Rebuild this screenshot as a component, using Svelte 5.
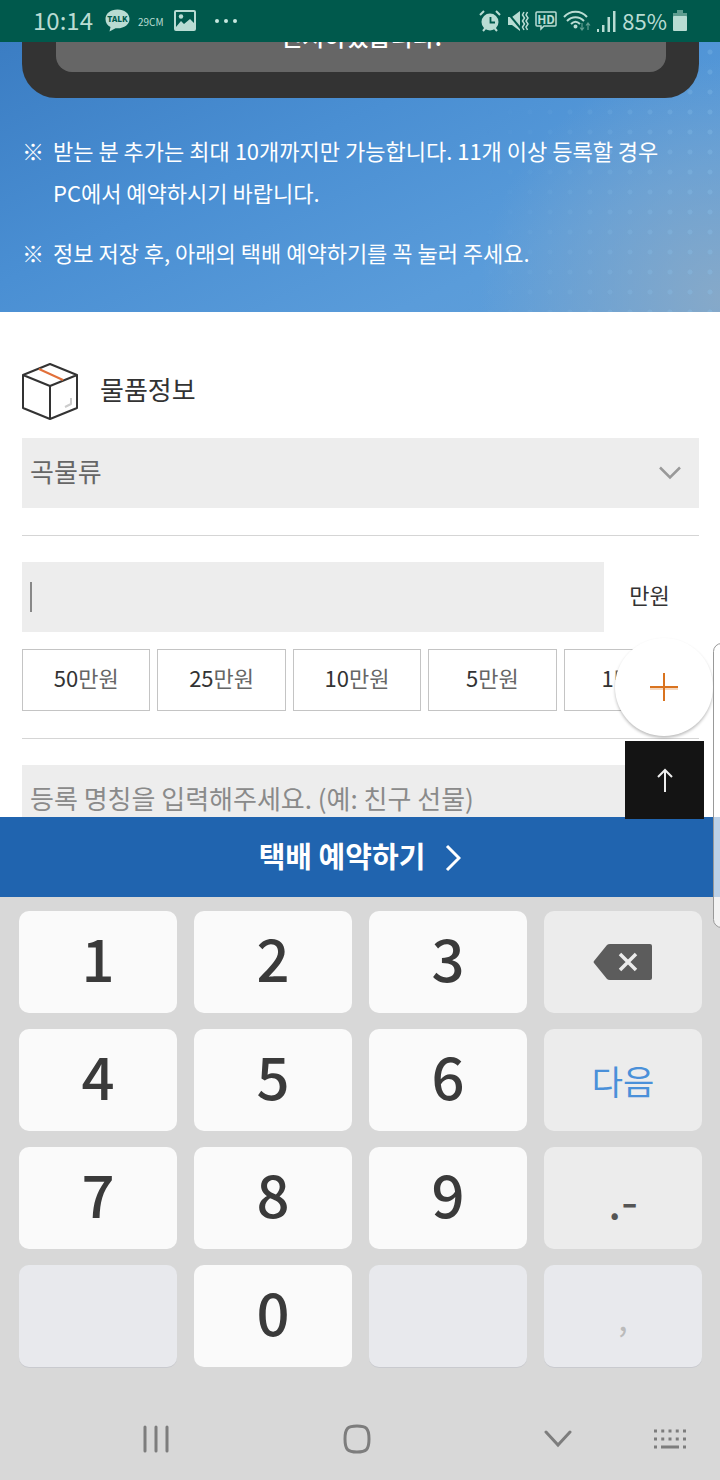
<script>
    let item = "곡물류";
    let amount = "";
    let nickname = "";
    const items = ["곡물류"];
    const amounts = [50, 25, 10, 5, 1];
    const notices = [
        "받는 분 추가는 최대 10개까지만 가능합니다. 11개 이상 등록할 경우 PC에서 예약하시기 바랍니다.",
        "정보 저장 후, 아래의 택배 예약하기를 꼭 눌러 주세요.",
    ];
    const keys = [
        { label: "1", type: "digit" },
        { label: "2", type: "digit" },
        { label: "3", type: "digit" },
        { label: "", type: "fn back" },
        { label: "4", type: "digit" },
        { label: "5", type: "digit" },
        { label: "6", type: "digit" },
        { label: "다음", type: "fn next" },
        { label: "7", type: "digit" },
        { label: "8", type: "digit" },
        { label: "9", type: "digit" },
        { label: ".-", type: "fn mark" },
        { label: "", type: "off" },
        { label: "0", type: "digit" },
        { label: "", type: "off" },
        { label: ",", type: "off" },
    ];
    function press(key) {
        if (key.type === "digit") {
            amount += key.label;
        } else if (key.type === "fn back") {
            amount = amount.slice(0, -1);
        }
    }
</script>

<div class="screen">
    <header class="status">
        <span class="time">10:14</span>
        <svg width="25" height="24" viewBox="0 0 25 24">
            <path d="M12.500 0.500C5.500 0.500 0.500 4.500 0.500 10c0 4 2 6.500 5 8l-1 4.500 6-3.300c8 0.800 14-3.200 14-9.200 0-5.500-5-9.500-12-9.500z" fill="#b9dcd3" />
            <text x="12.500" y="13" text-anchor="middle" font-size="8" font-weight="900" fill="#00594c">TALK</text>
        </svg>
        <span class="brand">29CM</span>
        <svg class="photo" width="22" height="22" viewBox="0 0 22 22">
            <rect x="1" y="1" width="20" height="19" rx="1" fill="none" stroke="#b9dcd3" stroke-width="2" />
            <circle cx="7" cy="6.500" r="2.200" fill="#b9dcd3" />
            <path d="M2 17l5-6 3 3 6-5 5 5v6H2z" fill="#b9dcd3" />
        </svg>
        <svg class="more" width="24" height="6" viewBox="0 0 24 6" fill="#c8e8e0">
            <circle cx="3" cy="3" r="2" /><circle cx="12" cy="3" r="2" /><circle cx="21" cy="3" r="2" />
        </svg>
        <span class="space"></span>
        <svg width="22" height="22" viewBox="0 0 22 22">
            <circle cx="11" cy="12" r="8.500" fill="#b9dcd3" />
            <path d="M1 5l4-4M21 5l-4-4M4 21l2.500-3M18 21l-2.500-3" stroke="#b9dcd3" stroke-width="2" />
            <path d="M11.500 7v5.500H16" fill="none" stroke="#00594c" stroke-width="1.800" />
        </svg>
        <svg width="22" height="22" viewBox="0 0 22 22">
            <path d="M1 7h4l8-6v20l-8-6H1z" fill="#b9dcd3" />
            <path d="M0 2l15 18" stroke="#00594c" stroke-width="2" />
            <path d="M17 2l-1.500 3 2 3-2 3 2 3-2 3 1.500 3M20.500 2L19 5l2 3-2 3 2 3-2 3 1.500 3" fill="none" stroke="#b9dcd3" stroke-width="1.500" />
        </svg>
        <svg width="22" height="20" viewBox="0 0 22 20">
            <path d="M2 1h18q1 0 1 1v12q0 1-1 1H9l-3 3v-3H2q-1 0-1-1V2q0-1 1-1z" fill="none" stroke="#b9dcd3" stroke-width="1.500" />
            <text x="11" y="12.500" text-anchor="middle" font-size="12" font-weight="700" fill="#b9dcd3">HD</text>
        </svg>
        <svg width="28" height="22" viewBox="0 0 28 22" fill="none" stroke="#b9dcd3" stroke-width="2">
            <path d="M1 7c6-7 17-7 23 0M4 11c5-5 12-5 17 0M8 14c3-3 6-3 9 0" />
            <circle cx="12.500" cy="16.500" r="1" />
            <path d="M19 13v7M17 17.500l2 2.500 2-2.500M25 20v-7M23 15.500l2-2.500 2 2.500" stroke="#5f9d90" stroke-width="1.200" />
        </svg>
        <svg width="19" height="21" viewBox="0 0 19 21" fill="#b9dcd3">
            <rect y="18" width="2" height="3" /><rect x="5" y="14" width="2.500" height="7" /><rect x="10.500" y="6" width="2.500" height="15" /><rect x="16" width="2.500" height="21" />
        </svg>
        <span class="percent">85%</span>
        <svg width="14" height="22" viewBox="0 0 14 22">
            <path d="M4 0h6v3h4v4H0V3h4z" fill="#5f9d90" />
            <rect y="6" width="14" height="15" rx="1" fill="#b9dcd3" />
        </svg>
    </header>

    <div class="page">
        <main>
            <section class="hero">
                <div class="card"><p>인지하였습니다.</p></div>
                <ul>
                    {#each notices as notice}
                        <li><span>※</span><span>{notice}</span></li>
                    {/each}
                </ul>
            </section>

            <form>
                <h2>
                    <svg width="56" height="58" viewBox="0 0 56 58" fill="none" stroke="#333" stroke-width="2" stroke-linejoin="round">
                        <path d="M28 2l27 11v33L28 57 1 46V13zM1 13l27 11 27-11M28 24v33" />
                        <path d="M17 7l24 11" stroke="#e2703a" />
                        <path d="M49 36v6l-6 3" stroke="#ccc" />
                    </svg>
                    <span>물품정보</span>
                </h2>
                <div class="selectBox">
                    <select bind:value={item} aria-label="물품정보">
                        {#each items as name}
                            <option>{name}</option>
                        {/each}
                    </select>
                    <svg width="24" height="14" viewBox="0 0 24 14" fill="none" stroke="#999" stroke-width="2.500">
                        <path d="M2 1.500l10 10 10-10" />
                    </svg>
                </div>
                <hr />
                <div class="amount">
                    <div class="field">
                        <input id="amount" inputmode="numeric" bind:value={amount} />
                        {#if !amount}<i class="caret"></i>{/if}
                    </div>
                    <label for="amount">만원</label>
                </div>
                <div class="presets">
                    {#each amounts as value}
                        <button type="button" on:click={() => (amount = String(value))}><b>{value}</b>만원</button>
                    {/each}
                </div>
                <hr />
                <input
                    bind:value={nickname}
                    aria-label="등록 명칭"
                    placeholder="등록 명칭을 입력해주세요. (예: 친구 선물)"
                />
            </form>
        </main>
        <button class="add" aria-label="추가">
            <svg width="30" height="30" viewBox="0 0 30 30" stroke="#d9731f" stroke-width="2">
                <path d="M1 17h28" stroke="#f6d9c0" />
                <path d="M15 1v28M1 15h28" />
            </svg>
        </button>
        <button class="top" aria-label="맨 위로">
            <svg width="16" height="24" viewBox="0 0 16 24" fill="none" stroke="#eee" stroke-width="2">
                <path d="M8 24V2M1 9l7-7 7 7" />
            </svg>
        </button>
    </div>

    <button class="reserve">
        <span>택배 예약하기</span>
        <svg width="16" height="28" viewBox="0 0 16 28" fill="none" stroke="#fff" stroke-width="3">
            <path d="M2 2l12 12L2 26" />
        </svg>
    </button>

    <footer>
        <div class="keys">
            {#each keys as key}
                <button class={key.type} disabled={key.type === "off"} on:click={() => press(key)}>
                    {#if key.type === "fn back"}
                        <svg width="60" height="38" viewBox="0 0 60 38">
                            <path d="M17 1h40q2 0 2 2v32q0 2-2 2H17q-2 0-3-1L1 20q-1-1 0-2L14 2q1-1 3-1z" fill="#5c5c5c" />
                            <path d="M27 11l16 16M43 11L27 27" stroke="#ececec" stroke-width="3.500" />
                        </svg>
                    {:else}
                        {key.label}
                    {/if}
                </button>
            {/each}
        </div>
        <nav>
            <button aria-label="최근 앱">
                <svg width="28" height="28" viewBox="0 0 28 28" stroke="#7d7d7d" stroke-width="3" stroke-linecap="round">
                    <path d="M3 2v24M14 2v24M25 2v24" />
                </svg>
            </button>
            <button aria-label="홈">
                <svg width="30" height="30" viewBox="0 0 30 30" fill="none" stroke="#7d7d7d" stroke-width="3">
                    <path d="M15 2c9 0 12 2 12 13s-3 13-12 13S3 26 3 15 6 2 15 2z" />
                </svg>
            </button>
            <button aria-label="닫기">
                <svg width="28" height="18" viewBox="0 0 28 18" fill="none" stroke="#7d7d7d" stroke-width="3" stroke-linecap="round">
                    <path d="M2 2l12 13L26 2" />
                </svg>
            </button>
            <button class="keyboard" aria-label="키보드">
                <svg width="32" height="20" viewBox="0 0 32 20" stroke="#7d7d7d" stroke-width="3">
                    <path d="M0 2h32M0 10h32" stroke-dasharray="3 4.250" />
                    <path d="M0 18h3M7 18h18M29 18h3" />
                </svg>
            </button>
        </nav>
    </footer>
    <div class="edge"></div>
</div>

<style>
    :global(body) {
        background: #fff;
        font-family: "Noto Sans CJK KR", "Noto Sans", sans-serif;
    }
    .screen,
    .screen * {
        box-sizing: border-box;
    }
    .screen {
        position: relative;
        display: flex;
        flex-direction: column;
        height: 100vh;
        overflow: hidden;
    }
    button,
    input,
    select {
        font-family: inherit;
        border: 0;
        margin: 0;
        padding: 0;
    }
    svg {
        display: block;
        flex: none;
    }

    .status {
        display: flex;
        align-items: center;
        gap: 6px;
        flex: none;
        height: 42px;
        padding: 0 33px;
        background: #00594c;
        color: #b9dcd3;
        font-size: 22px;
    }
    .time {
        margin-right: 6px;
        padding-bottom: 4px;
        font-size: 24px;
    }
    .percent {
        padding-bottom: 2px;
    }
    .brand {
        margin-left: 2px;
        font-size: 10px;
    }
    .photo {
        margin-left: 4px;
    }
    .more {
        margin-left: 12px;
    }
    .space {
        flex: 1;
    }

    .page {
        position: relative;
        flex: 1;
        min-height: 0;
    }
    main {
        height: 100%;
        overflow: hidden;
    }
    .hero {
        position: relative;
        padding: 0 21px 39px 22px;
        color: #fff;
        background:
            radial-gradient(circle at 100% 95%, #86a9c9 0, #86a9c900 240px),
            linear-gradient(155deg, #3b7dc3 0%, #4a8fd3 40%, #5a9cda 75%, #619fd8 100%);
    }
    /* faint dot texture fading in from the right */
    .hero::before {
        content: "";
        position: absolute;
        inset: 0;
        background: radial-gradient(circle, rgba(140, 195, 235, 0.35) 2px, transparent 3px) 0 0 / 20px 20px;
        mask-image: linear-gradient(100deg, transparent 65%, #000 100%);
    }
    .card,
    ul {
        position: relative;
    }
    .card {
        height: 56px;
        padding: 0 33px 26px 34px;
        background: #333;
        border-radius: 0 0 34px 34px;
    }
    .card p {
        display: flex;
        align-items: flex-end;
        justify-content: center;
        height: 30px;
        margin: 0;
        padding-bottom: 22px;
        overflow: hidden;
        background: #666;
        border-radius: 0 0 16px 16px;
        font-size: 24px;
        font-weight: 500;
        line-height: 28px;
    }
    ul {
        display: flex;
        flex-direction: column;
        gap: 18px;
        list-style: none;
        margin: 0;
        padding: 31px 0 0;
        font-size: 22px;
        line-height: 42px;
        word-break: keep-all;
    }
    li {
        display: grid;
        grid-template-columns: 31px 1fr;
    }

    form {
        padding: 50px 21px 0 22px;
    }
    h2 {
        display: flex;
        align-items: center;
        gap: 22px;
        height: 58px;
        margin: 0 0 18px;
        color: #333;
        font-size: 26px;
        font-weight: 400;
    }
    h2 span {
        padding-bottom: 6px;
    }
    .selectBox,
    .field {
        position: relative;
    }
    select,
    input {
        display: block;
        width: 100%;
        height: 70px;
        padding: 0 8px 6px;
        background: #ededed;
        border-radius: 0;
        color: #666;
        font-size: 26px;
        appearance: none;
        outline: 0;
    }
    input::placeholder {
        color: #8a8a8a;
    }
    .selectBox svg {
        position: absolute;
        right: 17px;
        top: 28px;
        pointer-events: none;
    }
    hr {
        margin: 27px 0 26px;
        border: 0;
        border-top: 1px solid #d5d5d5;
    }
    .amount {
        display: grid;
        grid-template-columns: 86% 14%;
        align-items: center;
        margin-bottom: 17px;
        color: #333;
        font-size: 22px;
    }
    .amount label {
        padding: 0 4px 6px 0;
        text-align: center;
    }
    .caret {
        position: absolute;
        left: 8px;
        top: 20px;
        width: 2px;
        height: 30px;
        background: #888;
        pointer-events: none;
    }
    .presets {
        display: flex;
        gap: 7px;
        padding-right: 7px;
    }
    .presets button {
        flex: 1;
        height: 62px;
        padding-bottom: 6px;
        background: #fff;
        border: 1px solid #c4c4c4;
        color: #666;
        font-size: 22px;
    }
    .presets b {
        color: #333;
        font-weight: 400;
    }

    .add,
    .top {
        position: absolute;
        display: flex;
        align-items: center;
        justify-content: center;
    }
    .add {
        right: 7px;
        bottom: 81px;
        width: 98px;
        height: 98px;
        border-radius: 50%;
        background: #fff;
        box-shadow: 0 2px 3px rgba(0, 0, 0, 0.25);
    }
    .top {
        right: 16px;
        bottom: -2px;
        z-index: 1;
        width: 79px;
        height: 78px;
        background: #141414;
    }

    .reserve {
        display: flex;
        align-items: center;
        justify-content: center;
        gap: 20px;
        flex: none;
        height: 80px;
        padding-top: 2px;
        background: #2064af;
        color: #fff;
        font-size: 29px;
        font-weight: 700;
    }
    .reserve span {
        padding-bottom: 6px;
    }

    footer {
        flex: none;
        padding: 14px 18px 0 19px;
        background: #d8d8d8;
    }
    .keys {
        display: grid;
        grid-template-columns: repeat(4, 1fr);
        grid-auto-rows: 102px;
        gap: 16px 17px;
    }
    .keys button {
        display: flex;
        align-items: center;
        justify-content: center;
        border-radius: 10px;
        font-size: 34px;
    }
    .keys .digit {
        padding-bottom: 10px;
        background: #fafafa;
        color: #3a3a3a;
        font-size: 58px;
        font-weight: 500;
    }
    .keys .fn {
        background: #ececec;
        color: #555;
    }
    .keys .mark {
        font-size: 48px;
    }
    .keys .next {
        color: #4a90d9;
    }
    .keys .off {
        background: #e8e9ed;
        color: #bbb;
        box-shadow: 0 1px 0 #c9cacf;
    }
    nav {
        display: flex;
        height: 113px;
        padding: 30px 0 0 57px;
    }
    nav button {
        display: flex;
        flex: 160;
        align-items: center;
        justify-content: center;
        background: none;
    }
    nav button:nth-child(-n + 2) {
        margin-right: 41px;
    }
    nav .keyboard {
        flex: 64;
    }

    .edge {
        position: absolute;
        right: -10px;
        bottom: 552px;
        z-index: 2;
        width: 17px;
        height: 285px;
        background: rgba(255, 255, 255, 0.7);
        border: 1px solid #999;
        border-radius: 10px;
    }
</style>
